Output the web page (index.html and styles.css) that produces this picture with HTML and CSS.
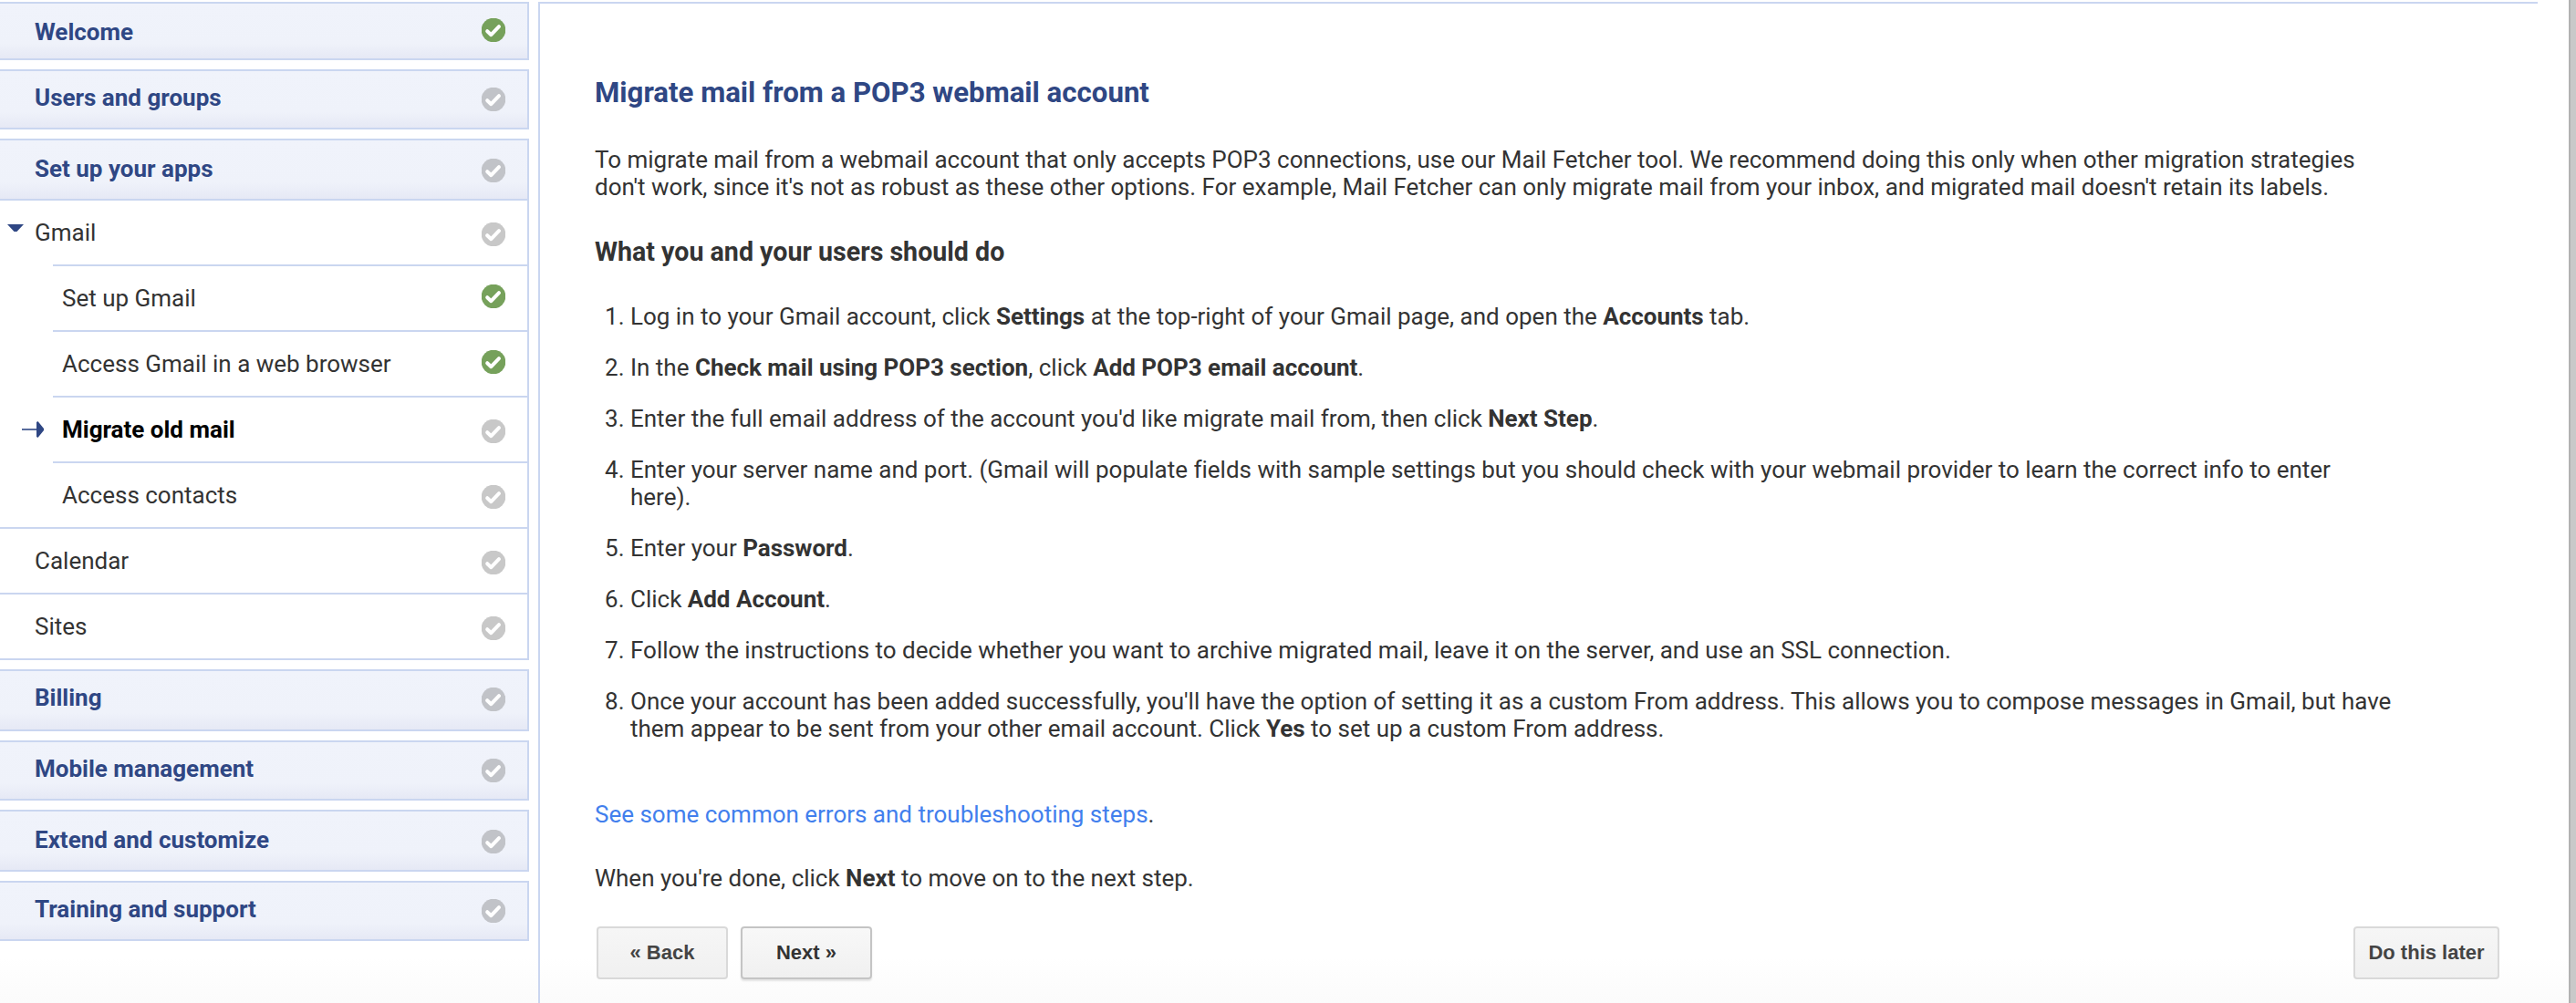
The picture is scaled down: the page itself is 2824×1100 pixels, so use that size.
FILE: index.html
```
<!DOCTYPE html>
<html lang="en">
<head>
<meta charset="utf-8">
<title>Migrate mail from a POP3 webmail account</title>
<link rel="stylesheet" href="styles.css">
</head>
<body>
<svg class="defs" aria-hidden="true">
  <symbol id="check" viewBox="0 0 26 26">
    <circle cx="13" cy="13" r="13.3"/>
    <path d="M6.2 14.2 10.4 18.2 19 9.2" fill="none" stroke="#fff" stroke-width="4" stroke-linecap="round" stroke-linejoin="round"/>
  </symbol>
</svg>
<div class="layout">
  <nav class="sidebar">
    <div class="section short tall"><span>Welcome</span><svg class="check done"><use href="#check"/></svg></div>
    <div class="section"><span>Users and groups</span><svg class="check"><use href="#check"/></svg></div>
    <div class="group">
      <div class="section tall long"><span>Set up your apps</span><svg class="check"><use href="#check"/></svg></div>
      <div class="item parent"><svg class="caret" viewBox="0 0 18 8"><path d="M0 0H18L10.5 8H7.5Z"/></svg><span>Gmail</span><svg class="check"><use href="#check"/></svg></div>
      <div class="sub">
        <div class="item"><span>Set up Gmail</span><svg class="check done"><use href="#check"/></svg></div>
        <div class="item"><span>Access Gmail in a web browser</span><svg class="check done"><use href="#check"/></svg></div>
        <div class="item current"><svg class="arrow" viewBox="0 0 24 18"><path d="M0 8H16V10H0Z" opacity=".8"/><path d="M16 1 17.5 0 24 8V10L17.5 18 16 17Z"/></svg><span>Migrate old mail</span><svg class="check"><use href="#check"/></svg></div>
        <div class="item"><span>Access contacts</span><svg class="check"><use href="#check"/></svg></div>
      </div>
      <div class="item"><span>Calendar</span><svg class="check"><use href="#check"/></svg></div>
      <div class="item"><span>Sites</span><svg class="check"><use href="#check"/></svg></div>
    </div>
    <div class="section long"><span>Billing</span><svg class="check"><use href="#check"/></svg></div>
    <div class="section"><span>Mobile management</span><svg class="check"><use href="#check"/></svg></div>
    <div class="section tall long"><span>Extend and customize</span><svg class="check"><use href="#check"/></svg></div>
    <div class="section"><span>Training and support</span><svg class="check"><use href="#check"/></svg></div>
  </nav>
  <main class="panel">
    <h1>Migrate mail from a POP3 webmail account</h1>
    <p class="intro">To migrate mail from a webmail account that only accepts POP3 connections, use our Mail Fetcher tool. We recommend doing this only when other migration strategies<br>don't work, since it's not as robust as these other options. For example, Mail Fetcher can only migrate mail from your inbox, and migrated mail doesn't retain its labels.</p>
    <h2>What you and your users should do</h2>
    <ol>
      <li>Log in to your Gmail account, click <b>Settings</b> at the top-right of your Gmail page, and open the <b>Accounts</b> tab.</li>
      <li>In the <b>Check mail using POP3 section</b>, click <b>Add POP3 email account</b>.</li>
      <li>Enter the full email address of the account you'd like migrate mail from, then click <b>Next Step</b>.</li>
      <li>Enter your server name and port. (Gmail will populate fields with sample settings but you should check with your webmail provider to learn the correct info to enter<br>here).</li>
      <li>Enter your <b>Password</b>.</li>
      <li>Click <b>Add Account</b>.</li>
      <li>Follow the instructions to decide whether you want to archive migrated mail, leave it on the server, and use an SSL connection.</li>
      <li>Once your account has been added successfully, you'll have the option of setting it as a custom From address. This allows you to compose messages in Gmail, but have<br>them appear to be sent from your other email account. Click <b>Yes</b> to set up a custom From address.</li>
    </ol>
    <p class="more"><a href="#">See some common errors and troubleshooting steps</a>.</p>
    <p class="finish">When you're done, click <b>Next</b> to move on to the next step.</p>
    <div class="buttons">
      <button>« Back</button>
      <button class="primary">Next »</button>
      <button class="later">Do this later</button>
    </div>
  </main>
  <div class="scrollbar"></div>
</div>
</body>
</html>
```
FILE: styles.css
```
* { box-sizing: border-box; }
body {
  margin: 0;
  background: #fff linear-gradient(#fff, #fbfbfb) no-repeat 0 100% / 100% 50px;
  color: #333;
  font: 26px/30px Roboto, sans-serif;
}
.defs { display: none; }
.layout { display: flex; height: 1100px; overflow: hidden; }
.sidebar {
  width: 580px;
  padding-top: 2px;
  display: flex;
  flex-direction: column;
  gap: 10px;
}
.section, .item { display: flex; justify-content: space-between; white-space: nowrap; }
.section {
  height: 66px;
  padding: 14px 24px 0 38px;
  border: 2px solid #cad6f0;
  border-left: 0;
  background: linear-gradient(#f0f3fb, #eff2fa 72%, #e6e9f5);
  color: #2f4784;
  font-weight: bold;
}
.section.tall { padding-top: 16px; }
.section.short { height: 64px; }
.section.long { height: 68px; }
.item {
  position: relative;
  height: 72px;
  padding: 20px 24px 0 38px;
  border: solid #cad6f0;
  border-width: 0 2px 2px 0;
}
.group > .item.parent { height: 70px; border-bottom: 0; }
.sub { margin-left: 58px; }
.sub .item { padding-left: 10px; border-width: 2px 2px 0 0; }
.sub + .item { border-top-width: 2px; height: 74px; }
.current { color: #000; font-weight: bold; }
.check { width: 26px; height: 26px; margin-top: 4px; fill: #c8c8c8; }
.section .check { fill: #c1c3c8; }
.check.done, .section .check.done { margin-top: 0; fill: #76a15b; }
.caret { position: absolute; left: 8px; top: 26px; width: 18px; height: 8px; fill: #2f4784; }
.arrow { position: absolute; left: -34px; top: 26px; width: 24px; height: 18px; fill: #2f4784; }
.panel {
  width: 2192px;
  height: 1098px;
  margin: 2px 0 0 10px;
  padding: 80px 42px 0 60px;
  border: solid #cad6f0;
  border-width: 2px 0 0 2px;
  white-space: nowrap;
}
h1, h2, p, ol { margin: 0; }
p, ol { letter-spacing: -0.009px; }
h1 { font-size: 31.2px; line-height: 36px; color: #2f4784; }
.intro { margin-top: 40px; }
h2 { margin-top: 40px; font-size: 28.6px; line-height: 32px; }
ol { margin-top: 40px; padding-left: 39px; display: grid; gap: 26px; }
.more { margin-top: 64px; }
.finish { margin-top: 40px; }
a { color: #427fed; text-decoration: none; }
.buttons { display: flex; gap: 14px; margin: 38px 0 0 2px; }
button {
  width: 144px;
  height: 58px;
  padding: 0;
  border: 2px solid #d9d9d9;
  border-radius: 4px;
  background: linear-gradient(#f6f6f6, #f0f0f0);
  color: #444;
  font: bold 22px "Liberation Sans", Arial, sans-serif;
}
.primary { border-color: #c4c4c4; color: #333; background: linear-gradient(#f8f8f8, #f0f0f0); box-shadow: 0 2px 2px rgba(0,0,0,.1); }
.later { width: 160px; margin-left: auto; }
.scrollbar { width: 8px; margin-left: auto; border-left: 2px solid #b2b2b2; background: #c9c9c9; }
```
